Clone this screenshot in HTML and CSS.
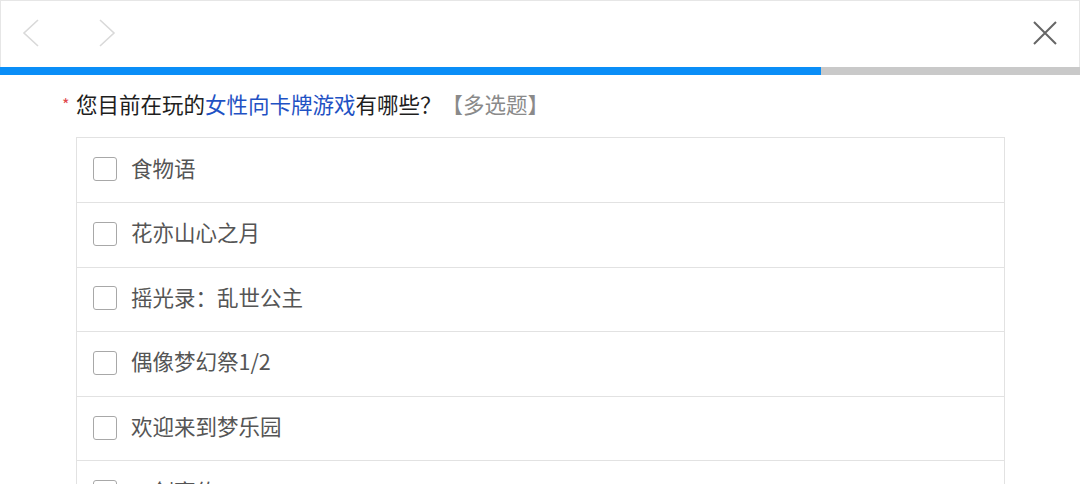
FILE: index.html
```html
<!DOCTYPE html>
<html lang="zh">
<head>
<meta charset="utf-8">
<title>问卷</title>
<link rel="stylesheet" href="styles.css">
</head>
<body>
<header class="topbar">
  <div class="nav">
    <svg class="arrow" viewBox="0 0 20 30" width="20" height="30"><path d="M17 2 L3 15 L17 28" fill="none" stroke="#d9d9d9" stroke-width="1.6"/></svg>
    <svg class="arrow fwd" viewBox="0 0 20 30" width="20" height="30"><path d="M3 2 L17 15 L3 28" fill="none" stroke="#d9d9d9" stroke-width="1.6"/></svg>
  </div>
  <svg class="close" viewBox="0 0 26 26" width="26" height="26"><path d="M2 2 L24 24 M24 2 L2 24" fill="none" stroke="#666" stroke-width="2"/></svg>
</header>
<div class="progress"><div class="progress-fill" style="width:76%"></div></div>
<main class="question">
  <div class="title"><span class="req">*</span>您目前在玩的<span class="hl">女性向卡牌游戏</span>有哪些？<span class="tag">【多选题】</span></div>
  <ul class="options">
    <li class="opt"><span class="box"></span><span class="label">食物语</span></li>
    <li class="opt"><span class="box"></span><span class="label">花亦山心之月</span></li>
    <li class="opt"><span class="box"></span><span class="label">摇光录：乱世公主</span></li>
    <li class="opt"><span class="box"></span><span class="label">偶像梦幻祭1/2</span></li>
    <li class="opt"><span class="box"></span><span class="label">欢迎来到梦乐园</span></li>
    <li class="opt"><span class="box"></span><span class="label">三剑豪传</span></li>
  </ul>
</main>
</body>
</html>
```
FILE: styles.css
```css
* { box-sizing: border-box; }
html, body { margin: 0; padding: 0; background: #fff; }
body {
  font-family: "Noto Sans CJK SC", "Noto Sans", sans-serif;
  overflow: hidden;
  height: 484px;
}
.topbar {
  height: 67px;
  border: 1px solid #e6e6e6;
  border-bottom: none;
  display: flex;
  align-items: center;
  justify-content: space-between;
  padding: 0 21px 2px 20px;
}
.nav { display: flex; gap: 56px; align-items: center; }
.arrow { display: block; }
.close { display: block; }
.progress {
  height: 8px;
  background: #c9c9c9;
}
.progress-fill {
  height: 100%;
  background: #0a8ef7;
}
.question { padding: 14px 0 0 62px; }
.title {
  font-size: 21.5px;
  line-height: 28px;
  color: #1e1e1e;
  display: flex;
  align-items: center;
}
.title > * { flex: none; }
.req {
  color: #e0474c;
  font-size: 16px;
  width: 14px;
  margin-top: 1px;
}
.hl { color: #1f52c4; }
.tag { color: #8a8a8a; }
.options {
  list-style: none;
  margin: 19px 0 0 14px;
  padding: 0;
  width: 929px;
  border: 1px solid #e2e2e2;
}
.opt {
  height: 64.6px;
  display: flex;
  align-items: center;
  padding-left: 16px;
  border-top: 1px solid #e2e2e2;
  font-size: 21.5px;
  color: #555;
}
.opt:first-child { border-top: none; height: 64px; }
.box {
  width: 24px;
  height: 24px;
  border: 1.5px solid #a8a8a8;
  border-radius: 3px;
  margin-right: 14px;
  margin-bottom: 2px;
  flex: none;
}
.label { padding-bottom: 6px; }
```
